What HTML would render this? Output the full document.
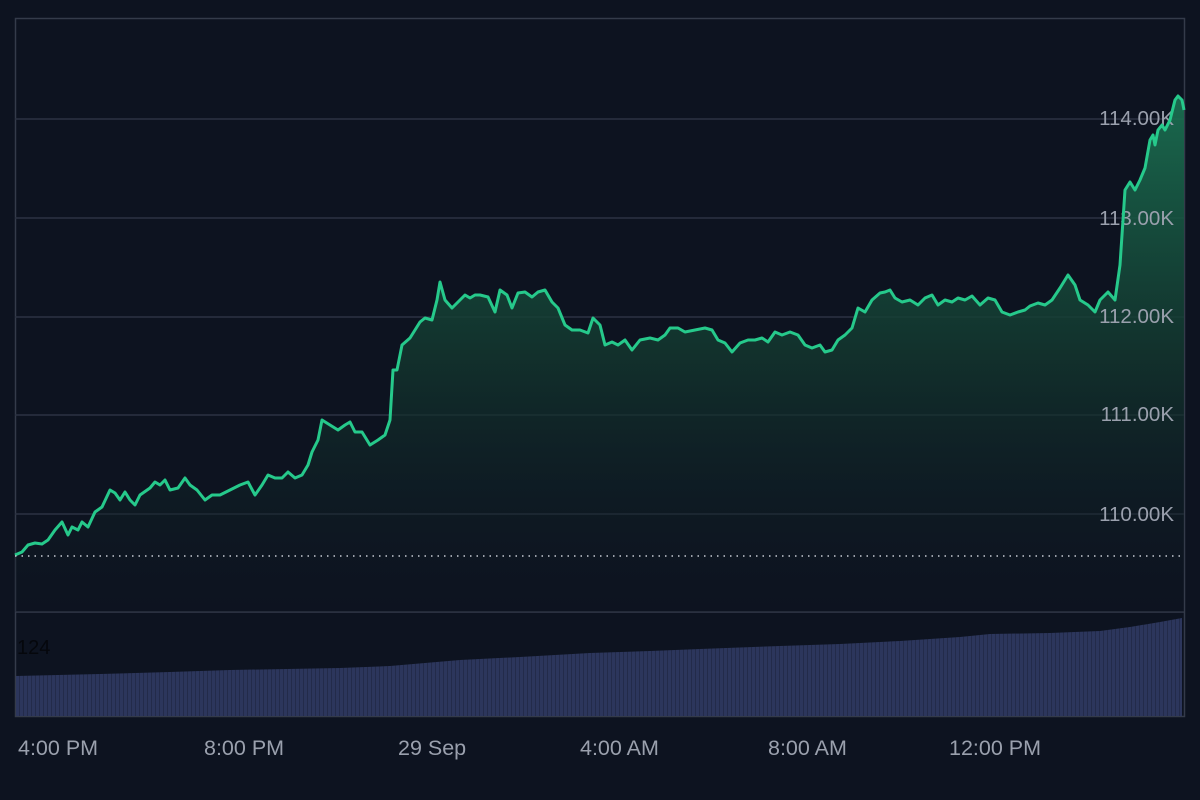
<!DOCTYPE html>
<html><head><meta charset="utf-8"><style>
html,body{margin:0;padding:0;background:#0d1320;}
svg{display:block}
text{font-family:"Liberation Sans",sans-serif;}
</style></head><body>
<svg width="1200" height="800" viewBox="0 0 1200 800">
<defs>
<linearGradient id="g" x1="0" y1="0" x2="0" y2="1">
<stop offset="0" stop-color="#1b7353" stop-opacity="0.9"/>
<stop offset="0.5" stop-color="#13382f" stop-opacity="0.8"/>
<stop offset="1" stop-color="#0d1320" stop-opacity="0.2"/>
</linearGradient>
<pattern id="vb" width="4" height="10" patternUnits="userSpaceOnUse">
<rect width="4" height="10" fill="#2c365c"/><rect x="3" width="1" height="10" fill="#232b4a"/>
</pattern>
</defs>
<rect width="1200" height="800" fill="#0d1320"/>
<rect x="15.5" y="18.5" width="1169" height="698" fill="none" stroke="#343b4a" stroke-width="1.5"/>
<g stroke="#2c3342" stroke-width="1.5">
<line x1="15" y1="119" x2="1184" y2="119"/>
<line x1="15" y1="218" x2="1184" y2="218"/>
<line x1="15" y1="317" x2="1184" y2="317"/>
<line x1="15" y1="415" x2="1184" y2="415"/>
<line x1="15" y1="514" x2="1184" y2="514"/>
<line x1="15" y1="612" x2="1184" y2="612" stroke="#343b4a"/>
</g>
<polygon fill="url(#g)" points="15,612 15,555 22,552 28,545 35,543 42,544 48,540 55,530 62,522 68,535 72,527 78,530 82,522 88,527 95,512 102,507 110,490 115,493 120,500 125,492 130,500 135,505 140,495 150,488 155,482 160,485 165,480 170,490 178,488 185,478 190,485 197,490 205,500 212,495 220,495 230,490 240,485 248,482 255,495 262,485 268,475 275,478 282,478 288,472 295,478 302,475 308,465 312,452 318,440 322,420 330,425 338,430 345,425 350,422 355,432 362,432 370,445 378,440 385,435 390,420 393,370 397,370 402,345 410,338 415,330 420,322 425,318 432,320 437,300 440,282 445,300 452,308 458,302 465,295 470,298 475,295 480,295 488,297 495,312 500,290 507,295 512,308 518,293 525,292 532,297 538,292 545,290 552,302 558,308 565,325 572,330 580,330 588,333 593,318 600,325 605,345 612,342 618,345 625,340 632,350 640,340 650,338 658,340 665,335 670,328 678,328 685,332 695,330 705,328 712,330 718,340 725,343 732,352 740,343 748,340 755,340 762,338 768,342 775,332 782,335 790,332 798,335 805,345 812,348 820,345 825,352 832,350 838,340 845,335 852,328 858,308 865,312 872,300 880,293 885,292 890,290 895,298 902,302 910,300 918,305 925,298 932,295 938,305 945,300 952,302 958,298 965,300 972,296 980,305 988,298 995,300 1002,312 1010,315 1018,312 1025,310 1030,306 1038,303 1045,305 1052,300 1060,288 1068,275 1075,285 1080,300 1088,305 1095,312 1100,300 1108,292 1115,300 1120,265 1125,190 1130,182 1135,190 1140,180 1145,168 1150,140 1153,135 1155,145 1158,130 1162,125 1165,130 1170,120 1175,100 1178,96 1182,100 1184,110 1184,612"/>
<g fill="#9aa0ad" font-size="20.5" text-anchor="end">
<text x="1174" y="125">114.00K</text>
<text x="1174" y="225">113.00K</text>
<text x="1174" y="323">112.00K</text>
<text x="1174" y="421">111.00K</text>
<text x="1174" y="521">110.00K</text>
</g>
<polyline fill="none" stroke="#26c98b" stroke-width="3" stroke-linejoin="round" points="15,555 22,552 28,545 35,543 42,544 48,540 55,530 62,522 68,535 72,527 78,530 82,522 88,527 95,512 102,507 110,490 115,493 120,500 125,492 130,500 135,505 140,495 150,488 155,482 160,485 165,480 170,490 178,488 185,478 190,485 197,490 205,500 212,495 220,495 230,490 240,485 248,482 255,495 262,485 268,475 275,478 282,478 288,472 295,478 302,475 308,465 312,452 318,440 322,420 330,425 338,430 345,425 350,422 355,432 362,432 370,445 378,440 385,435 390,420 393,370 397,370 402,345 410,338 415,330 420,322 425,318 432,320 437,300 440,282 445,300 452,308 458,302 465,295 470,298 475,295 480,295 488,297 495,312 500,290 507,295 512,308 518,293 525,292 532,297 538,292 545,290 552,302 558,308 565,325 572,330 580,330 588,333 593,318 600,325 605,345 612,342 618,345 625,340 632,350 640,340 650,338 658,340 665,335 670,328 678,328 685,332 695,330 705,328 712,330 718,340 725,343 732,352 740,343 748,340 755,340 762,338 768,342 775,332 782,335 790,332 798,335 805,345 812,348 820,345 825,352 832,350 838,340 845,335 852,328 858,308 865,312 872,300 880,293 885,292 890,290 895,298 902,302 910,300 918,305 925,298 932,295 938,305 945,300 952,302 958,298 965,300 972,296 980,305 988,298 995,300 1002,312 1010,315 1018,312 1025,310 1030,306 1038,303 1045,305 1052,300 1060,288 1068,275 1075,285 1080,300 1088,305 1095,312 1100,300 1108,292 1115,300 1120,265 1125,190 1130,182 1135,190 1140,180 1145,168 1150,140 1153,135 1155,145 1158,130 1162,125 1165,130 1170,120 1175,100 1178,96 1182,100 1184,110"/>
<line x1="15" y1="556" x2="1184" y2="556" stroke="#c8ccd4" stroke-width="1.5" stroke-dasharray="1.5 5"/>
<polygon fill="url(#vb)" points="16,716 16,676 100,674 170,672 230,670 340,668 390,666 460,660 520,657 590,653 650,651 700,649 780,646 840,644 900,641 960,637 990,634 1050,633 1100,631 1130,627 1160,622 1182,618 1182,716"/>
<text x="17" y="654" font-size="20" fill="#05070c">124</text>
<g fill="#9aa0ad" font-size="21.5">
<text x="18" y="755">4:00 PM</text>
<text x="204" y="755">8:00 PM</text>
<text x="398" y="755">29 Sep</text>
<text x="580" y="755">4:00 AM</text>
<text x="768" y="755">8:00 AM</text>
<text x="949" y="755">12:00 PM</text>
</g>
</svg>
</body></html>
